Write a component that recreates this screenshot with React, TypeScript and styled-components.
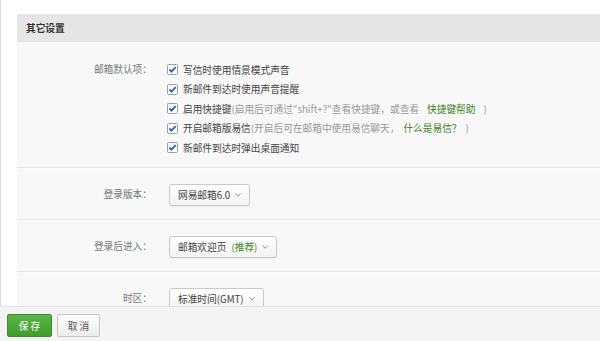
import React from 'react';
import styled, { createGlobalStyle } from 'styled-components';

const Global = createGlobalStyle`
  html, body { margin: 0; padding: 0; background: #fff; }
  body {
    font-family: "Noto Sans CJK SC", "Noto Sans", sans-serif;
    font-size: 9.7px;
    color: #444;
  }
`;

const Page = styled.div`
  height: 341px;
  width: 600px;
  display: flex;
  flex-direction: column;
  overflow: hidden;
`;

const Body = styled.div`
  flex: 1;
  min-height: 0;
  display: flex;
  overflow: hidden;
`;

const Rail = styled.div`
  width: 1px;
  background: #d6e0e4;
`;

const Main = styled.div`
  flex: 1;
  padding-left: 16px;
  display: flex;
  flex-direction: column;
`;

const TopEdge = styled.div`
  height: 1px;
  border-top: 1px solid #fff;
  background: #ebebeb;
  margin-bottom: 13px;
`;

const Header = styled.div`
  height: 28px;
  line-height: 28px;
  background: #e6e6e6;
  padding-left: 9px;
  font-weight: bold;
  color: #333;
`;

const Content = styled.div`
  flex: 1;
  background: #f8f8f8;
`;

const Row = styled.div<{ $top?: boolean }>`
  display: grid;
  grid-template-columns: 135px 1fr;
  column-gap: 15px;
  align-items: ${(p) => (p.$top ? 'start' : 'center')};
  padding: ${(p) => (p.$top ? '18px 0 9px' : '15px 0 13px')};
  border-bottom: 1px solid #e6e6e6;
  & + & { border-top: 1px solid #fdfdfd; }
`;

const Label = styled.div`
  text-align: right;
  color: #777;
  line-height: 19.5px;
`;

const Options = styled.div`
  display: flex;
  flex-direction: column;
`;

const Option = styled.div`
  display: flex;
  align-items: center;
  height: 19.5px;
  white-space: nowrap;
  color: #444;
`;

const Box = styled.svg`
  width: 11px;
  height: 11px;
  margin-right: 5px;
  flex: none;
`;

const Hint = styled.span`
  color: #999;
`;

const Link = styled.span<{ $gap?: number }>`
  color: #3f7f26;
  margin: 0 ${(p) => p.$gap ?? 0}px;
`;

const Select = styled.div`
  display: inline-flex;
  align-items: center;
  justify-self: start;
  height: 22px;
  box-sizing: border-box;
  margin-left: 2px;
  padding: 0 8px 0 8px;
  gap: 5px;
  border: 1px solid #c9c9c9;
  border-radius: 3px;
  background: linear-gradient(#ffffff, #f2f2f2);
  box-shadow: 0 1px 1px rgba(0, 0, 0, 0.05);
  color: #444;
  white-space: nowrap;
`;

const Green = styled.span`
  color: #3f8a25;
`;

const Chevron = styled.svg`
  width: 6px;
  height: 4px;
  flex: none;
`;

const Footer = styled.div`
  height: 35px;
  box-sizing: border-box;
  border-top: 1px solid #e2e2e2;
  background: #f4f4f4;
  padding: 7px 7px;
  display: flex;
  gap: 5px;
`;

const Button = styled.button<{ $primary?: boolean }>`
  height: 23px;
  width: ${(p) => (p.$primary ? 45 : 43)}px;
  box-sizing: border-box;
  padding: 0;
  border-radius: 2px;
  font-family: inherit;
  font-size: 9.7px;
  cursor: pointer;
  border: 1px solid ${(p) => (p.$primary ? '#3b8e2a' : '#c4c4c4')};
  background: ${(p) =>
    p.$primary ? 'linear-gradient(#5bb548, #3e9b2c)' : 'linear-gradient(#ffffff, #ebebeb)'};
  color: ${(p) => (p.$primary ? '#fff' : '#555')};
`;

const Check = () => (
  <Box viewBox="0 0 11 11">
    <defs>
      <linearGradient id="cbg" x1="0" y1="0" x2="0" y2="1">
        <stop offset="0" stopColor="#f2f4f7" />
        <stop offset="1" stopColor="#ffffff" />
      </linearGradient>
    </defs>
    <rect x="0.5" y="0.5" width="10" height="10" rx="1" fill="url(#cbg)" stroke="#98a2ad" />
    <path d="M2.4 5.5 L4.5 7.6 L8.7 3.1" fill="none" stroke="#2d66b3" strokeWidth="1.8" />
  </Box>
);

const Down = () => (
  <Chevron viewBox="0 0 6 4">
    <path d="M0.5 0.5 L3 3.2 L5.5 0.5" fill="none" stroke="#888" strokeWidth="0.9" />
  </Chevron>
);

export default function App() {
  return (
    <Page>
      <Global />
      <Body>
        <Rail />
        <Main>
          <TopEdge />
          <Header>其它设置</Header>
          <Content>
            <Row $top>
              <Label>邮箱默认项：</Label>
              <Options>
                <Option><Check />写信时使用情景模式声音</Option>
                <Option><Check />新邮件到达时使用声音提醒</Option>
                <Option>
                  <Check />启用快捷键
                  <Hint>(启用后可通过"shift+?"查看快捷键，或查看</Hint>
                  <Link $gap={8}>快捷键帮助</Link>
                  <Hint>)</Hint>
                </Option>
                <Option>
                  <Check />开启邮箱版易信
                  <Hint>(开启后可在邮箱中使用易信聊天，</Hint>
                  <Link $gap={4}>什么是易信？</Link>
                  <Hint>)</Hint>
                </Option>
                <Option><Check />新邮件到达时弹出桌面通知</Option>
              </Options>
            </Row>
            <Row>
              <Label>登录版本：</Label>
              <Select>网易邮箱6.0<Down /></Select>
            </Row>
            <Row>
              <Label>登录后进入：</Label>
              <Select>邮箱欢迎页 <Green>(推荐)</Green><Down /></Select>
            </Row>
            <Row>
              <Label>时区：</Label>
              <Select>标准时间(GMT)<Down /></Select>
            </Row>
          </Content>
        </Main>
      </Body>
      <Footer>
        <Button $primary>保 存</Button>
        <Button>取 消</Button>
      </Footer>
    </Page>
  );
}
